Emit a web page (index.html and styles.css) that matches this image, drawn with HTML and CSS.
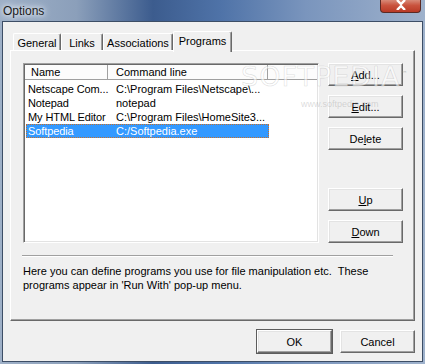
FILE: index.html
```html
<!DOCTYPE html>
<html>
<head>
    <title>Options</title>
    <link rel="stylesheet" href="styles.css">
</head>
<body>
<div class="window">
    <div class="titlebar">
        <span class="title">Options</span>
        <div class="close-btn">
            <svg width="14" height="10" viewBox="0 0 14 10"><path d="M3 0 L7 4 L11 0 M3 10 L7 6 L11 10" stroke="#fff" stroke-width="2.4" fill="none"/></svg>
        </div>
    </div>

    <div class="client">
        <div class="tabs">
            <div class="tab tab-general">General</div>
            <div class="tab tab-links">Links</div>
            <div class="tab tab-assoc">Associations</div>
            <div class="tab tab-active">Programs</div>
        </div>

        <div class="panel">
            <div class="watermark">SOFTPEDIA<sup>™</sup></div>
            <div class="watermark-url">www.softpedia.com</div>

            <div class="panel-top">
                <div class="list-view">
                    <div class="list-header">
                        <div class="head-cell head-name">Name</div>
                        <div class="head-cell head-cmd">Command line</div>
                        <div class="head-cell head-rest"></div>
                    </div>
                    <div class="list-rows">
                        <div class="row"><span class="cell-name">Netscape Com...</span><span class="cell-cmd">C:\Program Files\Netscape\...</span></div>
                        <div class="row"><span class="cell-name">Notepad</span><span class="cell-cmd">notepad</span></div>
                        <div class="row"><span class="cell-name">My HTML Editor</span><span class="cell-cmd">C:\Program Files\HomeSite3...</span></div>
                        <div class="row row-selected"><span class="cell-name">Softpedia</span><span class="cell-cmd">C:/Softpedia.exe</span></div>
                    </div>
                </div>

                <div class="side-buttons">
                    <button class="btn"><u>A</u>dd...</button>
                    <button class="btn"><u>E</u>dit...</button>
                    <button class="btn">De<u>l</u>ete</button>
                    <button class="btn btn-gap"><u>U</u>p</button>
                    <button class="btn"><u>D</u>own</button>
                </div>
            </div>

            <div class="separator"></div>

            <p class="hint">Here you can define programs you use for file manipulation etc.&nbsp; These<br>programs appear in 'Run With' pop-up menu.</p>
        </div>

        <div class="footer">
            <button class="btn btn-default">OK</button>
            <button class="btn">Cancel</button>
        </div>
    </div>
</div>
</body>
</html>
```

FILE: styles.css
```css
* {
    margin: 0;
    padding: 0;
    box-sizing: border-box;
}

body {
    font-family: 'Liberation Sans', Arial, sans-serif;
    font-size: 11px;
    color: #000;
    background: #6f8db8;
}

.window {
    width: 425px;
    height: 364px;
    padding: 0 2px 2px 2px;
    background: linear-gradient(90deg, #9eb0c7 0%, #8b9fba 18%, #3c5c8e 36%, #4f73a8 52%, #7a95bd 72%, #9fb2cc 100%);
    display: flex;
    flex-direction: column;
}

.titlebar {
    height: 21px;
    display: flex;
    justify-content: space-between;
    align-items: flex-start;
}

.title {
    font-size: 12px;
    color: #1b1b1b;
    margin: 4px 0 0 1px;
    text-shadow: 0 0 4px #dfe6ef, 0 0 6px #dfe6ef, 0 0 8px #dfe6ef;
}

.close-btn {
    width: 41px;
    height: 13px;
    margin-right: 2px;
    border: 1px solid #5b2a24;
    border-top: none;
    border-radius: 0 0 4px 4px;
    background: linear-gradient(180deg, #d88a78 0%, #c9533e 45%, #b93a26 100%);
    display: flex;
    justify-content: center;
    align-items: flex-start;
}

.client {
    flex: 1;
    background: #f0f0f0;
    border: 1px solid #3d4e66;
    padding: 9px 7px 0 7px;
}

.tabs {
    display: flex;
    height: 20px;
    padding-left: 3px;
}

.tab {
    height: 18px;
    margin-top: 2px;
    padding: 3px 0 0 0;
    text-align: center;
    background: #f0f0f0;
    border-top: 1px solid #fff;
    border-left: 1px solid #fff;
    border-right: 1px solid #696969;
    box-shadow: inset -1px 0 #a0a0a0;
    border-radius: 2px 2px 0 0;
}

.tab-general { width: 48px; }
.tab-links { width: 42px; }
.tab-assoc { width: 70px; }

.tab-active {
    width: 59px;
    height: 21px;
    margin-top: 0;
    padding-top: 3px;
    position: relative;
    z-index: 2;
}

.panel {
    position: relative;
    height: 271px;
    margin-top: -1px;
    border-top: 1px solid #fff;
    border-left: 1px solid #fff;
    border-right: 1px solid #696969;
    border-bottom: 1px solid #696969;
    box-shadow: inset -1px -1px #a0a0a0;
    padding: 12px 11px 0 12px;
}

.panel-top {
    display: flex;
}

.list-view {
    width: 296px;
    height: 180px;
    background: #fff;
    border-top: 1px solid #a0a0a0;
    border-left: 1px solid #a0a0a0;
    border-right: 1px solid #fff;
    border-bottom: 1px solid #fff;
    box-shadow: inset 1px 1px #696969, inset -1px -1px #e3e3e3;
    padding: 1px;
}

.list-header {
    display: flex;
    height: 15px;
    background: #fcfcfc;
    border-bottom: 1px solid #a0a0a0;
}

.head-cell {
    padding-top: 1px;
    border-right: 1px solid #a0a0a0;
}

.head-name {
    width: 83px;
    padding-left: 6px;
}

.head-cmd {
    width: 160px;
    padding-left: 8px;
}

.head-rest {
    flex: 1;
    border-right: none;
}

.list-rows {
    padding-top: 2px;
}

.row {
    display: flex;
    width: 243px;
    height: 14px;
    margin-left: 1px;
    border: 1px solid transparent;
    white-space: nowrap;
    line-height: 12px;
}

.row-selected {
    background: #3399ff;
    color: #fff;
    border: 1px dotted #c8702a;
}

.cell-name {
    width: 81px;
    padding-left: 1px;
    letter-spacing: -0.1px;
}

.cell-cmd {
    padding-left: 8px;
}

.side-buttons {
    display: flex;
    flex-direction: column;
    gap: 9px;
    margin-left: 9px;
}

.btn {
    width: 75px;
    height: 23px;
    font-family: 'Liberation Sans', Arial, sans-serif;
    font-size: 11px;
    color: #000;
    background: #f0f0f0;
    border-top: 1px solid #fff;
    border-left: 1px solid #fff;
    border-right: 1px solid #696969;
    border-bottom: 1px solid #696969;
    box-shadow: inset -1px -1px #a0a0a0, inset 1px 1px #e3e3e3;
}

.btn-gap {
    margin-top: 29px;
}

.btn-default {
    outline: 1px solid #5c5c5c;
    outline-offset: 0;
}

.separator {
    margin: 12px 10px 0 -1px;
    border-top: 1px solid #a0a0a0;
    border-bottom: 1px solid #fff;
}

.hint {
    margin-top: 7px;
    line-height: 14px;
}

.footer {
    display: flex;
    justify-content: flex-end;
    gap: 8px;
    margin-top: 9px;
}

.watermark {
    position: absolute;
    left: 230px;
    top: 10px;
    font-family: 'DejaVu Sans', sans-serif;
    font-size: 27px;
    letter-spacing: 1px;
    color: rgba(255, 255, 255, 0.6);
    -webkit-text-stroke: 0.6px rgba(120, 120, 120, 0.25);
    pointer-events: none;
    z-index: 3;
}

.watermark sup {
    font-size: 7px;
    -webkit-text-stroke: 0;
    color: rgba(140, 140, 140, 0.5);
}

.watermark-url {
    position: absolute;
    left: 290px;
    top: 48px;
    font-size: 9px;
    color: rgba(150, 150, 150, 0.35);
    pointer-events: none;
    z-index: 3;
}
```
